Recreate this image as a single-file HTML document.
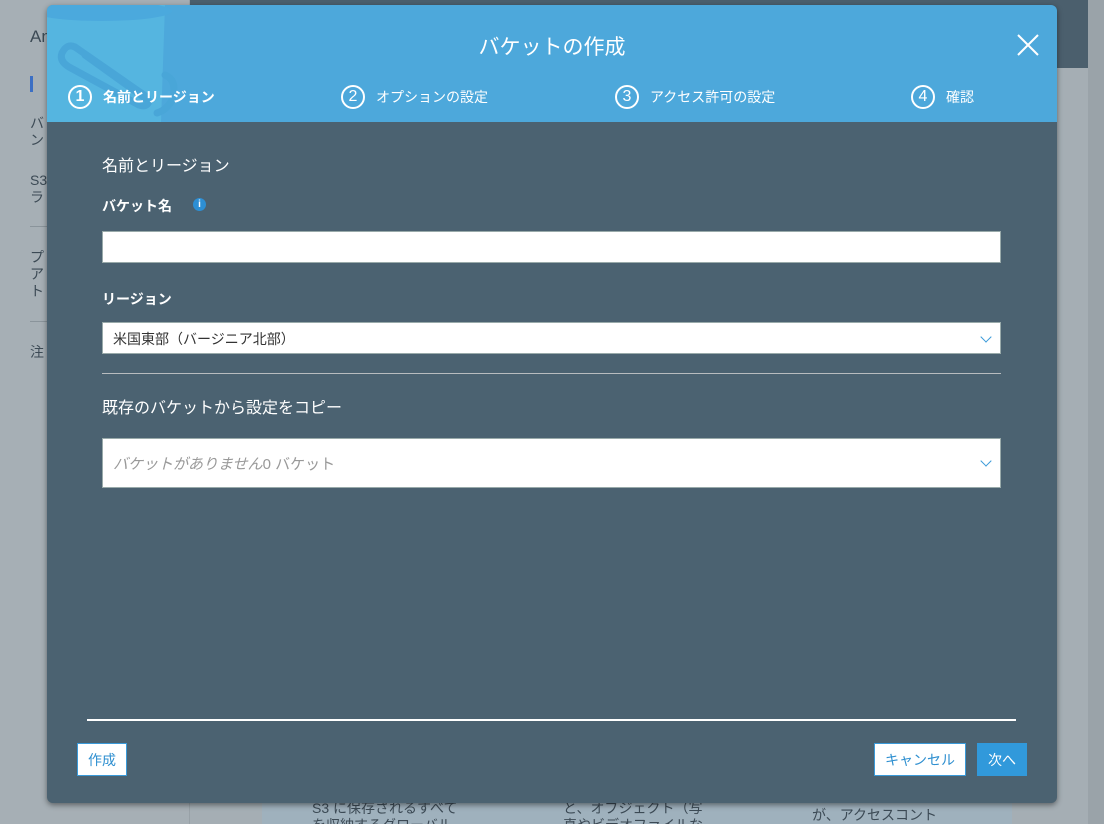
<!DOCTYPE html>
<html><head><meta charset="utf-8"><style>
*{margin:0;padding:0;box-sizing:border-box}
html,body{width:1104px;height:824px;overflow:hidden}
body{position:relative;background:#a5aeb4;font-family:"Liberation Sans","Noto Sans CJK JP",sans-serif}
.abs{position:absolute}
.side{left:0;top:0;width:190px;height:824px;background:#a6afb5;border-right:1px solid #98a1a7}
.top{left:190px;top:0;width:898px;height:68px;background:#4b5f6d}
.sb{left:1088px;top:0;width:16px;height:824px;background:#9aa3a9}
.st{color:#3c4a55;font-size:14px;line-height:17px}
.low{left:262px;top:790px;width:750px;height:34px;background:#9fb1bd}
.modal{left:47px;top:5px;width:1010px;height:798px;background:#4b6271;border-radius:6px;box-shadow:0 2px 6px rgba(0,0,0,.45);overflow:hidden}
.hdr{left:0;top:0;width:1010px;height:117px;background:#4da8db;overflow:hidden}
.title{left:0;top:26px;width:1010px;text-align:center;color:#fff;font-size:21px}
.step{top:80px;color:#fff;font-size:14px;display:flex;align-items:center}
.step .c{width:24px;height:24px;border:2px solid #fff;border-radius:50%;display:inline-flex;align-items:center;justify-content:center;font-size:16px;margin-right:11px}
.lbl{color:#fff;font-size:14px;font-weight:bold}
.inp{background:#fff;border:1px solid #9aa;}
.chev{position:absolute;right:10px;width:8px;height:8px;border-right:1.5px solid #3a9ad9;border-bottom:1.5px solid #3a9ad9;transform:rotate(45deg)}
.btn{background:#fff;border:1px solid #3a9ad9;color:#2e8fd0;font-size:14px;display:flex;align-items:center;justify-content:center}
</style></head><body>
<div class="abs side"></div>
<div class="abs top"></div>
<div class="abs low"></div>
<div class="abs sb"></div>
<div class="abs st" style="left:30px;top:28px;font-size:17px">An</div>
<div class="abs" style="left:30px;top:76px;width:3px;height:16px;background:#3b6fc4"></div>
<div class="abs st" style="left:30px;top:115px">バ<br>ン</div>
<div class="abs st" style="left:30px;top:172px">S3<br>ラ</div>
<div class="abs" style="left:30px;top:226px;width:20px;height:1px;background:#8a949b"></div>
<div class="abs st" style="left:30px;top:249px">プ<br>ア<br>ト</div>
<div class="abs" style="left:30px;top:321px;width:20px;height:1px;background:#8a949b"></div>
<div class="abs st" style="left:30px;top:344px">注</div>
<div class="abs st" style="left:312px;top:800px">S3 に保存されるすべて<br>を収納するグローバル</div>
<div class="abs st" style="left:563px;top:800px">と、オブジェクト（写<br>真やビデオファイルな</div>
<div class="abs st" style="left:812px;top:790px">・・・・・・・<br>が、アクセスコント</div>

<div class="abs modal">
 <div class="abs hdr">
  <svg class="abs" style="left:0;top:0" width="170" height="117">
   <path d="M0 0 L118 0 L114 117 L0 117 Z" fill="#55b5e0"/>
   <ellipse cx="55" cy="6" rx="70" ry="10" fill="#4ba9dd"/>
   <path d="M28 42 Q20 38 15 48 Q12 56 22 62 L92 100 Q100 103 102 96 L38 50" fill="none" stroke="#49a6d8" stroke-width="7" stroke-linecap="round" stroke-linejoin="round"/>
   <path d="M28 42 L100 92" stroke="#49a6d8" stroke-width="7" stroke-linecap="round"/>
   <path d="M118 70 Q130 75 126 92 Q122 104 110 108" fill="none" stroke="#49a6d8" stroke-width="7" stroke-linecap="round"/>
  </svg>
  <div class="abs title">バケットの作成</div>
  <svg class="abs" style="left:970px;top:29px" width="22" height="22"><path d="M1 1L21 21M21 1L1 21" stroke="#fff" stroke-width="2"/></svg>
  <div class="abs step" style="left:21px;font-weight:bold"><span class="c">1</span>名前とリージョン</div>
  <div class="abs step" style="left:294px"><span class="c">2</span>オプションの設定</div>
  <div class="abs step" style="left:568px"><span class="c">3</span>アクセス許可の設定</div>
  <div class="abs step" style="left:864px"><span class="c">4</span>確認</div>
 </div>
 <div class="abs" style="left:55px;top:147px;color:#fff;font-size:16px">名前とリージョン</div>
 <div class="abs lbl" style="left:55px;top:191px">バケット名</div>
 <div class="abs" style="left:146px;top:193px;width:13px;height:13px;border-radius:50%;background:#2d8fd4;color:#fff;font-size:10px;font-weight:bold;text-align:center;line-height:13px">i</div>
 <div class="abs inp" style="left:55px;top:226px;width:899px;height:32px"></div>
 <div class="abs lbl" style="left:55px;top:284px">リージョン</div>
 <div class="abs inp" style="left:55px;top:317px;width:899px;height:32px;font-size:14px;color:#333;padding:6px 0 0 10px">米国東部（バージニア北部）<span class="chev" style="top:10px"></span></div>
 <div class="abs" style="left:55px;top:368px;width:899px;height:1px;background:#b8bcbf"></div>
 <div class="abs" style="left:55px;top:389px;color:#fff;font-size:16px">既存のバケットから設定をコピー</div>
 <div class="abs inp" style="left:55px;top:433px;width:899px;height:50px;font-size:15px;color:#999;padding:14px 0 0 10px"><i>バケットがありません</i>0 バケット<span class="chev" style="top:18px"></span></div>
 <div class="abs" style="left:40px;top:714px;width:929px;height:2px;background:#fff"></div>
 <div class="abs btn" style="left:30px;top:738px;width:50px;height:33px">作成</div>
 <div class="abs btn" style="left:827px;top:738px;width:92px;height:33px">キャンセル</div>
 <div class="abs btn" style="left:930px;top:738px;width:50px;height:33px;background:#3199db;color:#fff;border-color:#3199db">次へ</div>
</div>
</body></html>
